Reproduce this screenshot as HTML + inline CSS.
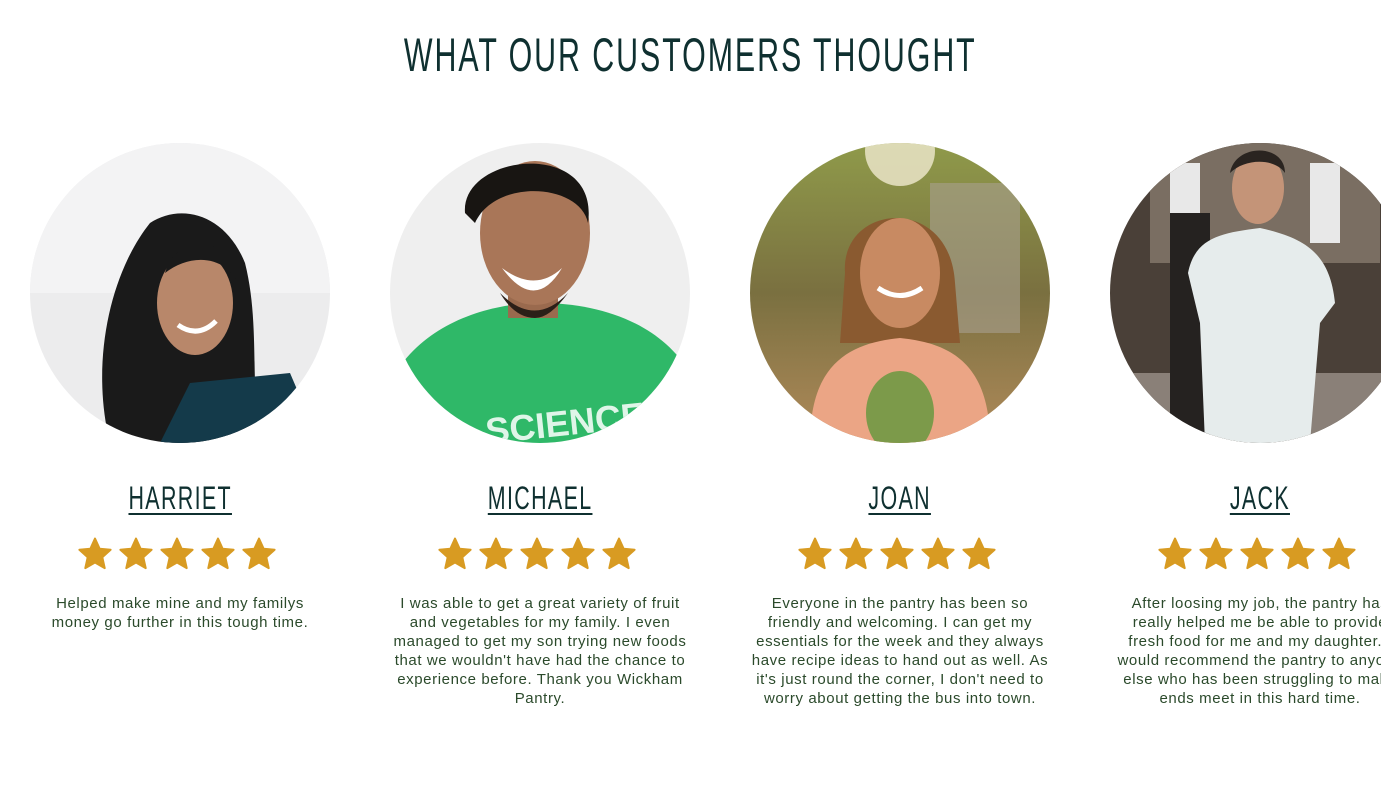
<!DOCTYPE html>
<html><head><meta charset="utf-8"><style>
html,body{margin:0;padding:0;background:#fff;width:1381px;height:796px;overflow:hidden;position:relative;font-family:"Liberation Sans",sans-serif}
h1{position:absolute;top:27px;left:0;width:1381px;margin:0;text-align:center;font-weight:400;font-size:47px;color:#0f3030;letter-spacing:3px;}
h1 span{display:inline-block;transform:scaleX(0.646);transform-origin:center;white-space:nowrap}
.col{position:absolute;top:143px;width:300px}
.ph{width:300px;height:300px;border-radius:50%;overflow:hidden}
.ph svg{display:block}
.name{position:absolute;top:337px;left:0;width:300px;text-align:center;font-size:32px;color:#0f3030;letter-spacing:2px}
.name span{display:inline-block;transform:scaleX(0.67);text-decoration:underline;text-decoration-thickness:2px;text-underline-offset:4px}
.stars{position:absolute;top:394px;left:48px;width:204px;height:36px}
.txt{position:absolute;top:451px;left:-20px;width:340px;text-align:center;font-size:15px;line-height:19px;color:#2b4a2b;white-space:nowrap;letter-spacing:0.6px}
</style></head><body>
<h1><span>WHAT OUR CUSTOMERS THOUGHT</span></h1>

<svg width="0" height="0" style="position:absolute"><defs>
<path id="st" d="M17 1.5l4.6 10.2 11 1.1-8.3 7.4 2.4 10.9L17 25.5l-9.7 5.6 2.4-10.9L1.4 12.8l11-1.1z" fill="#d89b22" stroke="#d89b22" stroke-width="2" stroke-linejoin="round"/>
</defs></svg>

<div class="col" style="left:30px">
<div class="ph"><svg width="300" height="300"><rect width="300" height="300" fill="#ececed"/><rect x="0" y="0" width="300" height="150" fill="#f3f3f4"/>
<path d="M80 300 C60 220 80 130 120 80 C150 60 195 70 215 120 C230 180 220 240 230 300Z" fill="#1a1a1a"/>
<path d="M160 240 L260 230 L290 300 L130 300Z" fill="#143a4a"/>
<ellipse cx="165" cy="160" rx="38" ry="52" fill="#b8876a"/>
<path d="M135 130 C150 80 215 100 212 150 C200 110 160 110 135 130Z" fill="#1a1a1a"/>
<path d="M148 182 Q168 196 186 178" stroke="#fff" stroke-width="5" fill="none"/>
</svg></div>
<div class="name"><span>HARRIET</span></div>
<svg class="stars"><use href="#st" x="0"/><use href="#st" x="41"/><use href="#st" x="82"/><use href="#st" x="123"/><use href="#st" x="164"/></svg>
<div class="txt">Helped make mine and my familys<br>money go further in this tough time.</div>
</div>

<div class="col" style="left:390px">
<div class="ph"><svg width="300" height="300"><rect width="300" height="300" fill="#efefef"/>
<path d="M0 240 C30 180 100 160 150 160 C210 160 270 180 300 230 L300 300 L0 300Z" fill="#2fb868"/>
<rect x="118" y="130" width="50" height="45" fill="#9a6a4e"/>
<ellipse cx="145" cy="90" rx="55" ry="72" fill="#a97658"/>
<path d="M75 70 C70 10 210 -5 198 80 C190 40 105 35 85 80Z" fill="#181512"/>
<path d="M112 125 Q145 150 172 125 Q145 170 112 125Z" fill="#fff"/>
<path d="M110 150 Q145 185 178 150 Q160 175 145 175 Q125 175 110 150Z" fill="#2b1f18"/>
<text x="95" y="295" fill="#dff5e8" font-size="36" font-weight="700" font-family="Liberation Sans" transform="rotate(-6 150 280)">SCIENCE</text>
</svg></div>
<div class="name"><span>MICHAEL</span></div>
<svg class="stars"><use href="#st" x="0"/><use href="#st" x="41"/><use href="#st" x="82"/><use href="#st" x="123"/><use href="#st" x="164"/></svg>
<div class="txt">I was able to get a great variety of fruit<br>and vegetables for my family. I even<br>managed to get my son trying new foods<br>that we wouldn't have had the chance to<br>experience before. Thank you Wickham<br>Pantry.</div>
</div>

<div class="col" style="left:750px">
<div class="ph"><svg width="300" height="300"><defs><linearGradient id="jg" x1="0" y1="0" x2="0" y2="1"><stop offset="0" stop-color="#8f9a4a"/><stop offset="0.5" stop-color="#7a7040"/><stop offset="1" stop-color="#b08a5a"/></linearGradient></defs>
<rect width="300" height="300" fill="url(#jg)"/><rect x="180" y="40" width="90" height="150" fill="#a8a090" opacity=".6"/><circle cx="150" cy="8" r="35" fill="#f0ead0" opacity=".8"/>
<path d="M95 130 C90 60 200 50 205 140 L210 200 L90 200Z" fill="#8a5a30"/>
<path d="M60 300 C60 220 100 200 150 195 C200 200 240 220 240 300Z" fill="#eba585"/>
<ellipse cx="150" cy="130" rx="40" ry="55" fill="#c88a62"/>
<path d="M128 145 Q150 160 172 145" stroke="#fff" stroke-width="5" fill="none"/>
<ellipse cx="150" cy="270" rx="34" ry="42" fill="#7c9a4a"/>
</svg></div>
<div class="name"><span>JOAN</span></div>
<svg class="stars"><use href="#st" x="0"/><use href="#st" x="41"/><use href="#st" x="82"/><use href="#st" x="123"/><use href="#st" x="164"/></svg>
<div class="txt">Everyone in the pantry has been so<br>friendly and welcoming. I can get my<br>essentials for the week and they always<br>have recipe ideas to hand out as well. As<br>it's just round the corner, I don't need to<br>worry about getting the bus into town.</div>
</div>

<div class="col" style="left:1110px">
<div class="ph"><svg width="300" height="300"><rect width="300" height="300" fill="#4a4038"/>
<rect x="40" y="0" width="230" height="120" fill="#7a6e62"/><rect x="60" y="20" width="30" height="80" fill="#e8e8e8"/><rect x="200" y="20" width="30" height="80" fill="#e8e8e8"/>
<rect x="0" y="230" width="300" height="70" fill="#8a8078"/>
<rect x="60" y="70" width="40" height="230" fill="#252220"/>
<path d="M78 130 C85 95 110 90 150 85 C195 95 220 110 225 160 L210 180 L200 300 L95 300 L90 180 Z" fill="#e6ecec"/>
<ellipse cx="148" cy="45" rx="26" ry="36" fill="#c49478"/>
<path d="M120 30 C125 0 175 0 175 30 C165 15 135 15 120 30Z" fill="#2a2420"/>
</svg></div>
<div class="name"><span>JACK</span></div>
<svg class="stars"><use href="#st" x="0"/><use href="#st" x="41"/><use href="#st" x="82"/><use href="#st" x="123"/><use href="#st" x="164"/></svg>
<div class="txt">After loosing my job, the pantry has<br>really helped me be able to provide<br>fresh food for me and my daughter. I<br>would recommend the pantry to anyone<br>else who has been struggling to make<br>ends meet in this hard time.</div>
</div>
</body></html>
